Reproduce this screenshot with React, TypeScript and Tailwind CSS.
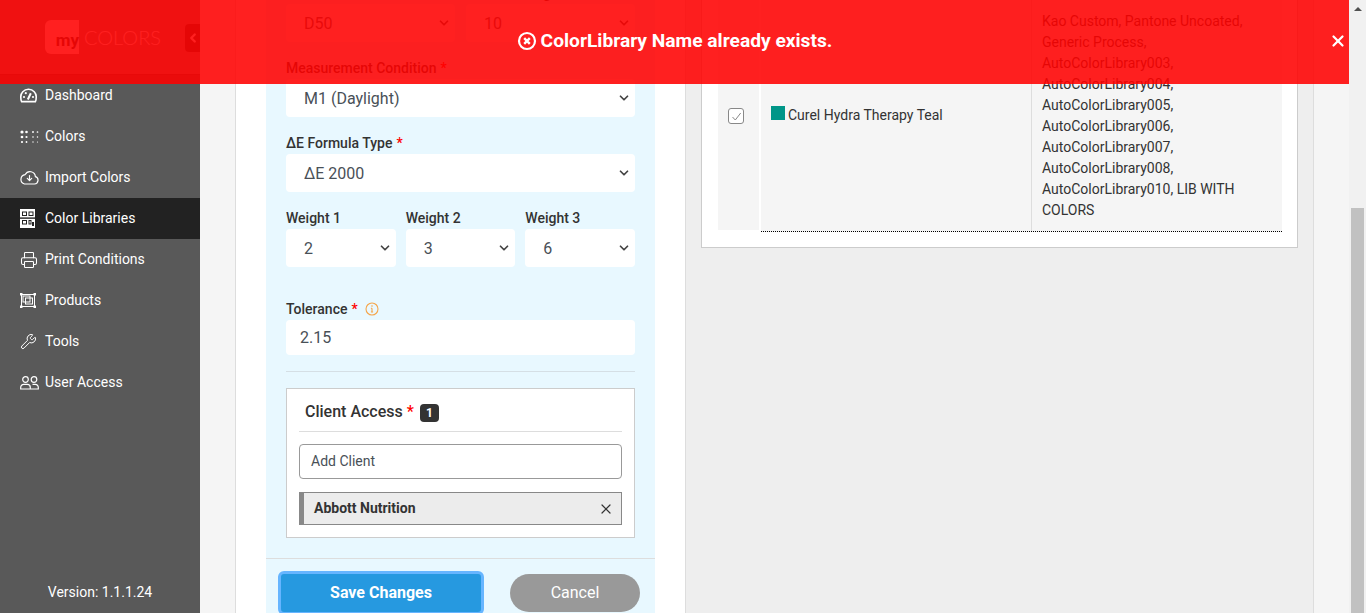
import { ChevronDown, ChevronLeft, Printer, Wrench, X } from "lucide-react";
import type { ReactNode } from "react";

const font = "font-['Roboto','Liberation_Sans',sans-serif]";

function DashboardIcon() {
  return (
    <svg width="17" height="15" viewBox="0 0 17 15" fill="none" stroke="currentColor" strokeWidth="1.6">
      <path d="M1.6 13.6C.9 12.4.8 11 .8 9.6A7.7 7.7 0 0 1 8.5 1.2a7.7 7.7 0 0 1 7.7 8.4c0 1.4-.1 2.8-.8 4z" />
      <path d="M7.8 11.5 10.8 5.2" strokeWidth="2" />
      <circle cx="4" cy="9" r="1.1" fill="currentColor" stroke="none" />
      <circle cx="5.8" cy="5.2" r="1.1" fill="currentColor" stroke="none" />
      <circle cx="13" cy="9" r="1.1" fill="currentColor" stroke="none" />
    </svg>
  );
}

function ColorsIcon() {
  const cols = [
    { x: 2, r: 1.6 },
    { x: 6.5, r: 1.3 },
    { x: 13, r: 0.95 },
    { x: 17.5, r: 0.85 },
  ];
  const rows = [
    { y: 2, k: 1 },
    { y: 7, k: 0.85 },
    { y: 12, k: 0.7 },
  ];
  return (
    <svg width="19" height="14" viewBox="0 0 19 14" fill="currentColor">
      {cols.map((c) => rows.map((r) => <circle key={`${c.x}-${r.y}`} cx={c.x} cy={r.y} r={c.r * r.k} />))}
    </svg>
  );
}

function ImportIcon() {
  return (
    <svg width="19" height="15" viewBox="0 0 19 15" fill="none" stroke="currentColor" strokeWidth="1.2" strokeLinecap="round" strokeLinejoin="round">
      <path d="M4.5 14h10a3.8 3.8 0 0 0 .9-7.4A5.4 5.4 0 0 0 5.2 4.6 4.8 4.8 0 0 0 4.5 14z" />
      <path d="M9.5 5.5v5M7.3 8.4l2.2 2.2 2.2-2.2" />
    </svg>
  );
}

function LibrariesIcon() {
  return (
    <svg width="15" height="19" viewBox="0 0 15 19">
      <rect width="15" height="19" fill="#fff" />
      <g fill="none" stroke="#222" strokeWidth="1">
        <rect x="2.5" y="3" width="4" height="3.5" />
        <rect x="9" y="3" width="4" height="3.5" />
        <rect x="2.5" y="11.5" width="4" height="3.5" />
        <rect x="9" y="11.5" width="2" height="3.5" />
      </g>
      <rect x="0" y="8.4" width="15" height="1.4" fill="#222" />
      <rect x="12" y="13" width="2" height="4" fill="#222" />
    </svg>
  );
}

function ProductsIcon() {
  return (
    <svg width="16" height="15" viewBox="0 0 16 15" fill="none" stroke="currentColor" strokeWidth="1">
      <rect x="1.5" y="1.5" width="13" height="12" />
      <rect x="3" y="3" width="7" height="6" />
      <rect x="5.5" y="5" width="7" height="6" />
      <g fill="currentColor" stroke="none">
        <rect x="0" y="0" width="2.5" height="2.5" />
        <rect x="13.5" y="0" width="2.5" height="2.5" />
        <rect x="0" y="12.5" width="2.5" height="2.5" />
        <rect x="13.5" y="12.5" width="2.5" height="2.5" />
      </g>
    </svg>
  );
}

function UsersIcon() {
  return (
    <svg width="19" height="14" viewBox="0 0 19 14" fill="none" stroke="currentColor" strokeWidth="1.2">
      <circle cx="5.5" cy="3.5" r="2.8" />
      <circle cx="14" cy="3.5" r="2.8" />
      <path d="M.7 13v-1.6a3 3 0 0 1 3-3h3.6a3 3 0 0 1 3 3V13z" />
      <path d="M12.5 8.4h2.8a3 3 0 0 1 3 3V13h-7.6" />
    </svg>
  );
}

const navItems = [
  { label: "Dashboard", icon: <DashboardIcon /> },
  { label: "Colors", icon: <ColorsIcon /> },
  { label: "Import Colors", icon: <ImportIcon /> },
  { label: "Color Libraries", icon: <LibrariesIcon />, active: true },
  { label: "Print Conditions", icon: <Printer size={18} strokeWidth={1.4} /> },
  { label: "Products", icon: <ProductsIcon /> },
  { label: "Tools", icon: <Wrench size={17} strokeWidth={1.4} /> },
  { label: "User Access", icon: <UsersIcon /> },
];

function Sidebar() {
  return (
    <aside className="w-[200px] shrink-0 h-full bg-[#595959] flex flex-col text-white">
      <div className="h-[75px] bg-[#888] border-b border-[#444] flex items-center shrink-0">
        <div className="ml-[45px] mt-[-1px] w-[34px] h-[34px] bg-white rounded-l-md flex items-end justify-end">
          <span className="text-[17px] font-bold leading-[27px] text-[#333]">my</span>
        </div>
        <span className="ml-[5px] text-[20px] font-['Lato'] font-light text-white leading-none">COLORS</span>
        <div className="ml-auto mt-[1px] w-[15px] h-[28px] bg-[#333] rounded-l-sm flex items-center justify-center">
          <ChevronLeft size={14} strokeWidth={4} />
        </div>
      </div>
      <nav>
        {navItems.map((item) => (
          <div
            key={item.label}
            className={`h-[41px] flex items-center text-[14px] ${item.active ? "bg-[#222]" : ""}`}
          >
            <span className="w-[45px] pl-[20px] flex items-center">{item.icon}</span>
            {item.label}
          </div>
        ))}
      </nav>
      <div className="mt-auto h-[42px] flex items-center justify-center text-[14px]">Version: 1.1.1.24</div>
    </aside>
  );
}

function Req() {
  return <span className="ml-1 text-[#ff0000]">*</span>;
}

function Field({ label, required, children }: { label: string; required?: boolean; children: ReactNode }) {
  return (
    <div className="mb-4">
      <label className="block h-[21px] text-[14px] leading-[21px] font-medium text-[#333]">
        {label}
        {required && <Req />}
      </label>
      {children}
    </div>
  );
}

function Select({ value }: { value: string }) {
  return (
    <div className="relative">
      <select
        defaultValue={value}
        className="block w-full h-[38px] appearance-none bg-white rounded-[4px] pl-[18px] pr-[24px] pt-[2px] text-[16px] text-[#495057] outline-none"
      >
        <option>{value}</option>
      </select>
      <ChevronDown className="absolute right-[4px] top-[12px] text-[#444]" size={14} strokeWidth={3} />
    </div>
  );
}

function LeftPanel() {
  return (
    <div className="w-[450px] shrink-0 h-full bg-white border-r border-[#ddd] pl-[30px] pr-[30px] flex flex-col">
      <div className="flex-1 min-h-0 bg-[#e8f8ff] flex flex-col">
        <div className="px-5 mt-[-17px]">
          <div className="grid grid-cols-2 gap-[11px]">
            <Field label="Illuminant" required>
              <Select value="D50" />
            </Field>
            <Field label="Observer Angle" required>
              <Select value="10" />
            </Field>
          </div>
          <Field label="Measurement Condition" required>
            <Select value="M1 (Daylight)" />
          </Field>
          <Field label="ΔE Formula Type" required>
            <Select value="ΔE 2000" />
          </Field>
          <div className="grid grid-cols-3 gap-[10px]">
            <Field label="Weight 1">
              <Select value="2" />
            </Field>
            <Field label="Weight 2">
              <Select value="3" />
            </Field>
            <Field label="Weight 3">
              <Select value="6" />
            </Field>
          </div>
          <label className="mt-4 h-[21px] flex items-center text-[14px] font-medium text-[#333]">
            Tolerance
            <Req />
            <svg className="ml-[7px] mt-[-1px]" width="14" height="14" viewBox="0 0 14 14" fill="none" stroke="#f5a54a" strokeWidth="1.1">
              <circle cx="7" cy="7" r="6" />
              <path d="M7 6.2v3.6M5.9 10h2.2M5.9 6.2H7" />
              <circle cx="7" cy="4" r=".8" fill="#f5a54a" stroke="none" />
            </svg>
          </label>
          <div className="h-[35px] bg-white rounded-[4px] pl-[14px] flex items-center text-[16px] text-[#495057]">2.15</div>
          <div className="mt-4 h-px bg-[#d5dfe5]" />
          <div className="mt-4 h-[150px] bg-white border border-[#ccc] px-3">
            <div className="h-[43px] border-b border-[#ddd] pl-[6px] pt-[4px] flex items-center text-[16px] font-medium text-[#333]">
              Client Access
              <Req />
              <span className="ml-[6px] mt-[1px] w-[19px] h-[18px] rounded-[4px] bg-[#333] text-white text-[12px] font-bold flex items-center justify-center">
                1
              </span>
            </div>
            <div className="mt-3 h-[35px] bg-white border border-[#999] rounded-[4px] pl-[11px] flex items-center text-[14px] text-[#495057]">
              Add Client
            </div>
            <div className="mt-[13px] h-[33px] bg-[#ececec] border border-[#888] border-l-[5px] pl-[10px] pr-[7px] flex items-center justify-between text-[14px] font-bold text-[#333]">
              Abbott Nutrition
              <X size={16} strokeWidth={1.8} />
            </div>
          </div>
        </div>
        <div className="mt-5 border-t border-[#ddd] flex-1 min-h-0">
          <div className="flex items-start ml-3 mr-[15px] pt-[12px] justify-between">
            <button className="w-[206px] h-[44px] shrink-0 rounded-[6px] bg-[#2699e0] border-[3px] border-[#66b5ff] text-white text-[16px] font-bold">
              Save Changes
            </button>
            <button className="w-[130px] h-[38px] mt-[3px] shrink-0 rounded-full bg-[#999] text-white text-[16px] font-normal">
              Cancel
            </button>
          </div>
        </div>
      </div>
    </div>
  );
}

const libraries =
  "Kao Custom, Pantone Uncoated, Generic Process, AutoColorLibrary003, AutoColorLibrary004, AutoColorLibrary005, AutoColorLibrary006, AutoColorLibrary007, AutoColorLibrary008, AutoColorLibrary010, LIB WITH COLORS";

function RightPanel() {
  return (
    <div className="flex-1 h-full bg-[#eee] px-[15px]">
      <div className="h-[248px] bg-white border-b border-x border-[#ccc] pl-4 pr-[15px] text-[14px] text-[#333]">
        <div className="flex h-[232px]">
          <div className="w-[41px] h-[230px] bg-[#f5f5f5] flex items-center justify-center shrink-0 pr-[5px]">
            <span className="w-4 h-4 mt-[2px] bg-white border border-[#888] rounded-[3px] flex items-center justify-center">
              <svg width="11" height="11" viewBox="0 0 11 11" fill="none" stroke="#888" strokeWidth="1">
                <path d="M1.5 6 4.3 9 9.7 2" />
              </svg>
            </span>
          </div>
          <div className="flex-1 ml-[2px] flex bg-[#f5f5f5] border-b border-dotted border-black">
            <div className="w-[271px] shrink-0 border-r border-[#ddd] pl-[10px] flex items-center">
              <span className="w-[14px] h-[14px] bg-[#009688] mr-[3px] mt-[-5px]" />
              Curel Hydra Therapy Teal
            </div>
            <div className="flex-1 pl-[10px] pr-[20px] pt-[11px] leading-[21px]">{libraries}</div>
          </div>
        </div>
      </div>
    </div>
  );
}

function Scrollbar() {
  return (
    <div className="w-[17px] shrink-0 h-full bg-[#f1f1f1] flex flex-col items-center">
      <svg className="mt-[7px]" width="8" height="4" viewBox="0 0 8 4" fill="#505050">
        <path d="M4 0 8 4H0z" />
      </svg>
      <div className="mt-auto w-[13px] h-[405px] bg-[#c1c1c1]" />
    </div>
  );
}

export default function App() {
  return (
    <div className={`${font} relative flex h-[613px] w-[1366px] overflow-hidden bg-[#f5f5f5]`}>
      <Sidebar />
      <div className="flex-1 h-full flex pl-[35px] min-w-0">
        <div className="flex-1 flex h-full border-l border-[#ddd] border-r mr-[35px] min-w-0">
          <LeftPanel />
          <RightPanel />
        </div>
      </div>
      <Scrollbar />

      {/* error toast sits over the page */}
      <div className="absolute left-0 top-0 right-[17px] h-[84px] bg-[#ff0000]/[.875] text-white flex items-center justify-center">
        <div className="flex items-center text-[19.2px] font-bold mb-[2px]">
          <svg className="mr-[4px]" width="20" height="20" viewBox="0 0 20 20" fill="none" stroke="#fff" strokeWidth="2.2">
            <circle cx="10" cy="10" r="8" />
            <path d="m7.2 7.2 5.6 5.6m0-5.6-5.6 5.6" strokeWidth="2.4" />
          </svg>
          ColorLibrary Name already exists.
        </div>
        <X className="absolute right-[2px] top-[32px]" size={18} strokeWidth={3} />
      </div>
    </div>
  );
}
